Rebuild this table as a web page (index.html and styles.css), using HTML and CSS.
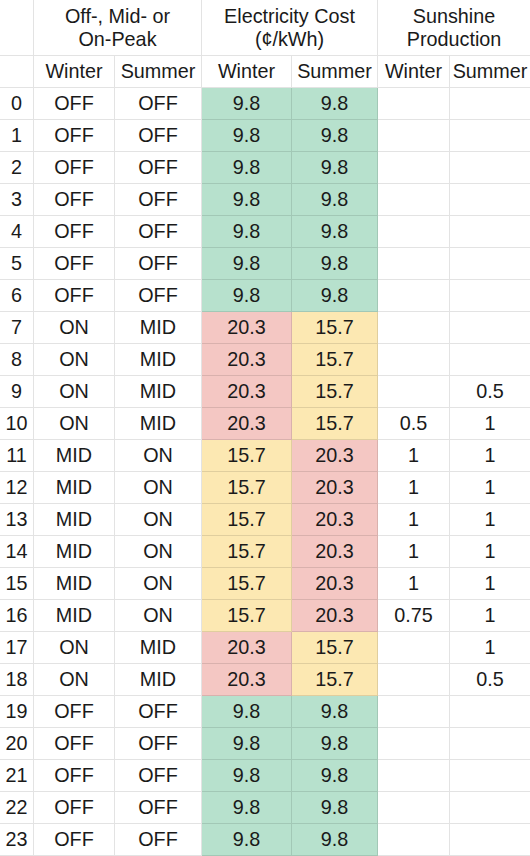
FILE: index.html
```html
<!DOCTYPE html>
<html>
<head>
<meta charset="utf-8">
<link rel="stylesheet" href="styles.css">
</head>
<body>
<table class="sheet">
<colgroup>
<col class="c-num"><col class="c-pw"><col class="c-ps"><col class="c-cw"><col class="c-cs"><col class="c-sw"><col class="c-ss">
</colgroup>
<thead>
<tr class="head">
<th></th>
<th colspan="2">Off-, Mid- or<br>On-Peak</th>
<th colspan="2">Electricity Cost<br>(¢/kWh)</th>
<th colspan="2">Sunshine<br>Production</th>
</tr>
<tr class="sub">
<th></th><th>Winter</th><th>Summer</th><th>Winter</th><th>Summer</th><th>Winter</th><th>Summer</th>
</tr>
</thead>
<tbody>
<tr><td>0</td><td>OFF</td><td>OFF</td><td class="g">9.8</td><td class="g">9.8</td><td></td><td></td></tr>
<tr><td>1</td><td>OFF</td><td>OFF</td><td class="g">9.8</td><td class="g">9.8</td><td></td><td></td></tr>
<tr><td>2</td><td>OFF</td><td>OFF</td><td class="g">9.8</td><td class="g">9.8</td><td></td><td></td></tr>
<tr><td>3</td><td>OFF</td><td>OFF</td><td class="g">9.8</td><td class="g">9.8</td><td></td><td></td></tr>
<tr><td>4</td><td>OFF</td><td>OFF</td><td class="g">9.8</td><td class="g">9.8</td><td></td><td></td></tr>
<tr><td>5</td><td>OFF</td><td>OFF</td><td class="g">9.8</td><td class="g">9.8</td><td></td><td></td></tr>
<tr><td>6</td><td>OFF</td><td>OFF</td><td class="g">9.8</td><td class="g">9.8</td><td></td><td></td></tr>
<tr><td>7</td><td>ON</td><td>MID</td><td class="r">20.3</td><td class="y">15.7</td><td></td><td></td></tr>
<tr><td>8</td><td>ON</td><td>MID</td><td class="r">20.3</td><td class="y">15.7</td><td></td><td></td></tr>
<tr><td>9</td><td>ON</td><td>MID</td><td class="r">20.3</td><td class="y">15.7</td><td></td><td>0.5</td></tr>
<tr><td>10</td><td>ON</td><td>MID</td><td class="r">20.3</td><td class="y">15.7</td><td>0.5</td><td>1</td></tr>
<tr><td>11</td><td>MID</td><td>ON</td><td class="y">15.7</td><td class="r">20.3</td><td>1</td><td>1</td></tr>
<tr><td>12</td><td>MID</td><td>ON</td><td class="y">15.7</td><td class="r">20.3</td><td>1</td><td>1</td></tr>
<tr><td>13</td><td>MID</td><td>ON</td><td class="y">15.7</td><td class="r">20.3</td><td>1</td><td>1</td></tr>
<tr><td>14</td><td>MID</td><td>ON</td><td class="y">15.7</td><td class="r">20.3</td><td>1</td><td>1</td></tr>
<tr><td>15</td><td>MID</td><td>ON</td><td class="y">15.7</td><td class="r">20.3</td><td>1</td><td>1</td></tr>
<tr><td>16</td><td>MID</td><td>ON</td><td class="y">15.7</td><td class="r">20.3</td><td>0.75</td><td>1</td></tr>
<tr><td>17</td><td>ON</td><td>MID</td><td class="r">20.3</td><td class="y">15.7</td><td></td><td>1</td></tr>
<tr><td>18</td><td>ON</td><td>MID</td><td class="r">20.3</td><td class="y">15.7</td><td></td><td>0.5</td></tr>
<tr><td>19</td><td>OFF</td><td>OFF</td><td class="g">9.8</td><td class="g">9.8</td><td></td><td></td></tr>
<tr><td>20</td><td>OFF</td><td>OFF</td><td class="g">9.8</td><td class="g">9.8</td><td></td><td></td></tr>
<tr><td>21</td><td>OFF</td><td>OFF</td><td class="g">9.8</td><td class="g">9.8</td><td></td><td></td></tr>
<tr><td>22</td><td>OFF</td><td>OFF</td><td class="g">9.8</td><td class="g">9.8</td><td></td><td></td></tr>
<tr><td>23</td><td>OFF</td><td>OFF</td><td class="g">9.8</td><td class="g">9.8</td><td></td><td></td></tr>
</tbody>
</table>
</body>
</html>
```
FILE: styles.css
```css
html, body {
  margin: 0;
  padding: 0;
  background: #fff;
}
.sheet {
  width: 530px;
  table-layout: fixed;
  border-collapse: separate;
  border-spacing: 0;
  font-family: "Liberation Sans", Arial, sans-serif;
  font-size: 19.8px;
  color: #1a1a1a;
}
.c-num { width: 34px; }
.c-pw { width: 81px; }
.c-ps { width: 87px; }
.c-cw { width: 90px; }
.c-cs { width: 86px; }
.c-sw { width: 72px; }
.c-ss { width: 80px; }
.sheet th, .sheet td {
  padding: 0;
  text-align: center;
  vertical-align: middle;
  font-weight: normal;
  border-right: 1px solid rgba(0, 0, 0, 0.11);
  border-bottom: 1px solid rgba(0, 0, 0, 0.11);
  white-space: nowrap;
  overflow: hidden;
}
.sheet th:last-child, .sheet td:last-child {
  border-right: none;
}
.head th {
  height: 55px;
  line-height: 23px;
}
.sub th, .sheet td {
  height: 31px;
  line-height: 31px;
}
.g { background: #b7e1cd; }
.r { background: #f4c7c3; }
.y { background: #fce8b2; }
```
